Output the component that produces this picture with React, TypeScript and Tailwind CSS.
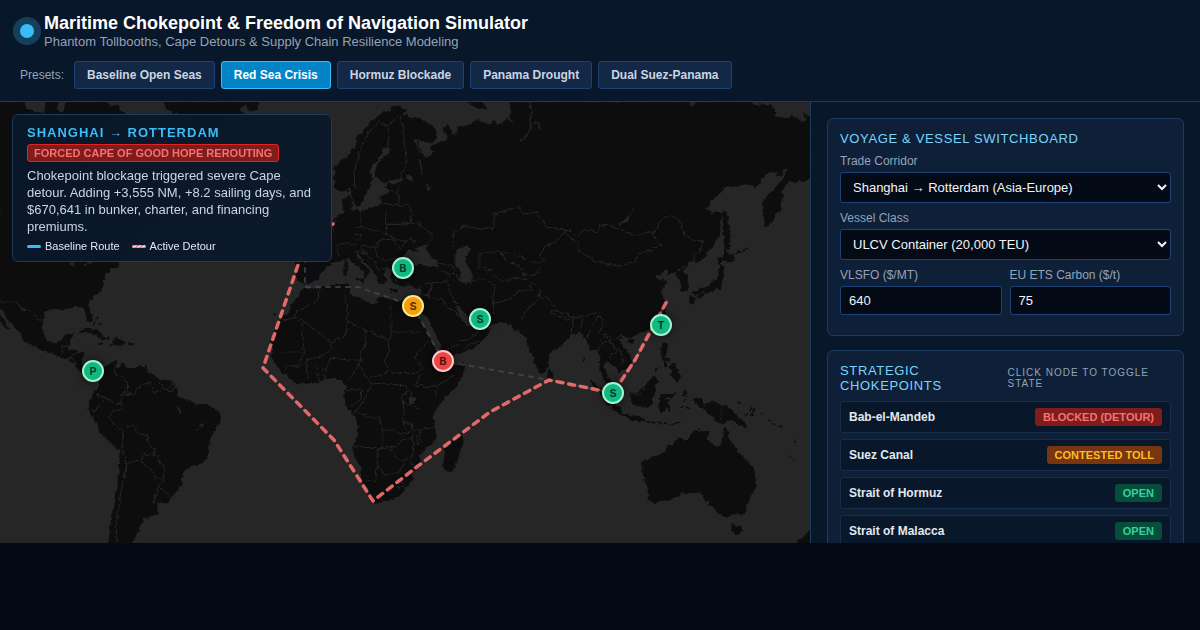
import React, { useState } from 'react';

type NodeState = 'open' | 'contested' | 'blocked';

const presets: string[] = [
  "Baseline Open Seas", "Red Sea Crisis", "Hormuz Blockade", "Panama Drought", "Dual Suez-Panama"
];

const stateLabels: Record<NodeState, string> = {
  blocked: "BLOCKED (DETOUR)",
  contested: "CONTESTED TOLL",
  open: "OPEN"
};

const badgeStyles: Record<NodeState, string> = {
  blocked: "bg-[#7f1d1d] text-[#f87171]",
  contested: "bg-[#78350f] text-[#fbbf24]",
  open: "bg-[#064e3b] text-[#34d399]"
};

const pinStyles: Record<NodeState, string> = {
  blocked: "bg-[#ef4444] border-[#fecaca]",
  contested: "bg-[#f59e0b] border-[#fde68a]",
  open: "bg-[#10b981] border-[#a7f3d0]"
};

// x / y are in map units, see MAP_W and MAP_H
const chokepoints: { name: string; state: NodeState; x: number; y: number }[] = [
  { name: "Bab-el-Mandeb", state: "blocked", x: 443, y: 259 },
  { name: "Suez Canal", state: "contested", x: 413, y: 204 },
  { name: "Strait of Hormuz", state: "open", x: 480, y: 217 },
  { name: "Strait of Malacca", state: "open", x: 613, y: 291 },
  { name: "Panama Canal", state: "open", x: 93, y: 269 },
  { name: "Bosporus", state: "open", x: 403, y: 166 },
  { name: "Taiwan Strait", state: "open", x: 661, y: 223 }
];

const strategic = chokepoints.slice(0, 4);

const MAP_W = 810;
const MAP_H = 441;

const land: string[] = [
  // North and Central America
  "M0 102L23 102 26 107 32 113 45 113 46 102 58 102 57 108 60 113 64 112 66 102 106 102 112 107 117 105 120 111 126 113 118 122 108 135 95 142 88 158 100 170 118 178 122 190 130 180 132 160 145 155 155 165 165 180 176 195 178 208 165 215 172 224 160 235 148 232 138 242 132 250 119 262 117 266 111 268 108 272 104 275 105 279 103 282 102 289 97 292 93 297 89 300 88 305 90 310 92 317 91 322 88 321 86 315 85 310 82 307 78 308 74 306 70 308 66 307 64 310 59 309 52 308 47 310 44 313 43 317 42 325 43 333 46 339 50 343 56 344 61 342 62 337 66 335 73 334 71 339 70 343 68 346 69 351 75 350 83 354 82 362 83 368 89 373 93 371 99 371 102 373 100 378 95 375 88 376 81 372 77 368 75 363 70 361 65 357 57 355 50 352 46 351 40 349 30 343 22 339 20 332 13 326 8 319 4 312 0 309Z",
  "M0 315L4 319 6 324 9 329 6 328 2 323 0 321Z",
  // Caribbean
  "M80 333L84 330 90 329 97 331 103 336 109 339 102 339 95 334 87 331Z",
  "M112 341L116 339 121 340 126 343 119 345 110 344 115 343Z", "M98 344L103 344 101 345Z", "M129 343L134 344 129 345Z",
  // South America
  "M100 374L103 370 107 365 112 363 117 361 115 366 118 368 122 364 127 367 133 368 140 367 146 366 147 371 152 374 155 378 160 381 167 380 173 382 175 388 178 393 177 397 183 399 190 401 194 404 205 405 213 408 219 412 221 418 219 424 214 431 209 436 209 444 208 453 204 462 198 464 192 465 187 469 182 473 181 483 178 489 174 494 168 501 162 503 156 502 158 508 157 513 150 517 142 517 143 523 138 526 139 531 135 531 136 536 134 540 128 543 109 543 110 530 112 514 116 500 118 485 120 463 120 450 112 443 103 436 98 427 92 415 89 410 90 405 91 399 95 392 99 387 101 380Z",
  // Greenland, Iceland and the British Isles
  "M164 102L168 110 178 114 182 128 190 142 202 152 212 140 228 128 242 122 243 113 239 108 246 104 250 111 257 109 258 102Z",
  "M245 153L262 150 266 158 252 163Z",
  "M302 225L305 212 300 200 308 190 312 200 320 215 316 226Z", "M292 218L300 207 303 215 299 222Z",
  // Eurasia
  "M333 222L335 218 340 214 344 213 343 205 344 199 350 196 352 203 349 208 355 211 364 211 372 208 379 208 381 203 380 197 383 195 388 195 390 190 386 188 387 184 393 185 401 182 404 180 400 178 392 180 385 182 379 179 375 175 377 166 381 160 388 154 391 149 389 146 383 147 381 154 375 162 371 167 369 173 373 180 369 187 366 192 363 201 357 207 354 201 352 193 351 187 347 191 341 192 336 189 334 180 336 173 334 167 341 161 348 157 351 151 357 145 356 139 364 130 371 122 378 118 382 113 390 111 396 106 407 111 400 114 410 117 420 119 430 125 436 130 437 138 432 143 423 141 415 138 419 147 423 155 430 157 435 152 430 147 441 142 446 141 447 135 443 129 447 125 452 133 455 137 459 127 470 125 477 120 482 123 490 124 492 120 497 124 503 124 507 119 516 127 511 118 511 102 688 102 690 106 694 107 696 102 750 102 754 106 762 105 770 105 774 109 776 117 785 118 793 116 800 121 805 123 806 117 803 113 810 117 810 178 803 182 799 179 795 183 788 181 784 187 781 193 783 198 780 202 781 210 775 212 774 219 767 226 765 227 764 214 763 205 766 197 773 191 778 185 783 178 789 169 788 167 784 168 782 174 776 177 777 171 769 172 762 178 759 184 755 187 749 184 743 184 737 187 726 186 719 194 711 202 705 209 711 212 710 216 716 212 722 213 720 225 719 235 712 246 703 258 698 263 692 261 688 265 682 272 686 276 688 283 687 290 682 292 681 281 677 276 678 273 671 271 667 276 669 270 665 269 660 275 655 276 658 280 664 280 668 282 661 288 660 292 664 299 666 305 663 314 657 324 649 330 641 333 633 336 626 338 621 335 618 340 623 347 629 354 631 361 629 366 620 372 619 368 613 366 608 361 604 361 603 367 606 372 609 378 612 383 614 389 608 385 603 378 600 370 601 361 599 353 596 349 590 350 588 342 583 335 580 331 576 333 571 333 568 339 562 345 553 350 548 354 548 365 546 370 541 374 538 369 534 359 530 350 526 337 522 334 519 329 515 331 512 326 507 322 497 323 488 325 491 329 486 335 479 343 472 348 465 350 457 354 448 357 444 360 441 355 437 345 431 335 425 322 417 308 420 300 422 292 422 286 415 285 409 284 405 286 398 285 394 283 391 277 393 270 389 268 383 270 383 275 386 280 382 285 378 279 374 271 366 263 360 255 356 252 356 256 363 264 370 271 365 278 364 271 356 265 349 258 343 260 334 262 327 266 322 273 317 280 308 283 304 284 297 280 296 263 310 258 308 242 318 232Z",
  // Novaya Zemlya
  "M468 102L476 108 486 108 482 102Z",
  // Africa
  "M304 288L309 290 318 289 326 286 337 285 347 284 350 287 349 293 356 298 365 301 371 305 377 303 376 299 383 297 393 301 403 302 411 302 416 312 422 324 428 335 433 345 439 356 445 363 452 367 464 363 465 368 461 378 455 388 445 398 437 407 433 413 433 421 435 428 436 437 432 444 423 450 419 455 421 465 414 472 412 480 405 489 399 496 388 500 376 503 371 500 370 492 364 482 361 468 354 454 354 444 359 433 357 420 353 414 346 405 345 395 347 386 342 382 335 377 324 379 316 382 306 382 298 384 290 378 281 371 277 364 271 356 273 350 271 344 273 337 276 328 282 318 290 312 291 304 298 298 302 291Z",
  "M461 433L463 441 459 453 456 463 452 471 446 471 443 466 445 457 444 449 452 444 458 439Z",
  // Mediterranean islands
  "M356 279L364 278 363 283Z", "M344 269L347 268 347 276 344 276Z", "M345 262L347 261 347 267 345 267Z", "M389 290L397 290 397 292 390 291Z", "M413 287L419 285 417 289Z",
  "M549 369L553 375 552 378 548 379 547 375Z",
  // Japan and Sakhalin
  "M723 212L727 214 728 225 731 236 729 240 730 248 725 251 724 230Z",
  "M724 249L729 255 735 258 728 262 722 260 719 264 719 257 724 257Z",
  "M720 264L724 269 722 279 720 289 713 290 707 293 703 291 695 294 692 293 700 289 708 287 714 282 718 276Z",
  "M690 295L695 298 694 303 690 302Z", "M697 296L704 293 703 296 698 298Z",
  "M630 339L634 340 631 344 628 342Z", "M661 314L665 309 665 317 662 322Z",
  // South-east Asia
  "M662 343L667 344 667 353 664 357 670 359 667 361 661 357Z", "M672 364L676 363 677 371 673 371 669 367Z", "M663 360L668 365 665 366Z",
  "M670 375L674 371 678 370 680 378 676 381 672 376Z",
  "M630 394L636 393 644 388 649 381 655 377 659 381 654 385 656 391 652 398 652 404 648 407 640 406 633 404Z",
  "M590 381L598 386 606 396 616 404 621 409 621 414 615 411 606 402 600 393Z",
  "M621 414L630 416 640 417 645 420 640 421 630 419Z",
  "M661 396L666 394 673 395 676 392 673 397 665 397 664 401 670 401 667 404 670 411 666 408 663 413 660 412 659 403Z",
  "M692 399L698 398 703 402 703 406 711 402 721 405 729 409 735 413 738 418 743 421 748 427 740 425 733 421 726 420 725 423 716 422 713 416 706 412 705 408 698 406Z",
  // Australia, Tasmania, New Zealand
  "M643 462L655 457 665 453 668 445 671 446 676 442 681 437 686 442 689 439 691 433 696 431 702 432 709 432 706 440 714 446 720 448 723 440 725 428 728 433 729 440 735 446 737 452 743 457 750 465 755 472 756 483 753 493 748 501 745 513 735 514 727 517 721 515 716 511 713 504 708 505 711 497 706 502 702 493 694 491 683 493 675 496 670 500 661 500 654 503 648 500 649 494 645 480 643 472Z",
  "M731 524L736 526 742 525 741 531 737 535 733 531Z",
  "M812 527L807 534 801 538 795 545 812 545Z"
];

// Inland seas and gulfs, painted back over the land
const water: string[] = [
  "M402 261L405 254 408 249 414 252 418 250 414 247 423 246 429 244 425 250 431 256 438 262 438 267 429 267 420 264 411 266Z",
  "M454 255L459 248 465 246 471 247 470 252 465 257 469 266 473 276 472 283 466 285 460 281 461 272 456 265Z",
  "M456 306L461 308 467 316 473 321 479 319 486 324 490 328 480 328 473 325 468 326 462 321Z",
  "M635 205L633 212 628 220 620 225 617 226 626 218 631 213Z",
  "M409 398L415 396 418 401 412 404 409 402Z",
  "M459 119L462 120 461 124 458 123Z", "M405 174L413 176 413 182 408 179Z",
  "M71 262L75 259 74 267 70 266Z"
];

// Rivers and lakes that are only a line wide
const thinWater = "M530 102L532 112 530 120 531 128 525 138 519 141M531 124L538 122 541 130M396 282L402 271M415 140L420 153 427 156M84 265L92 262M197 430L203 424M178 407L180 412M420 160L422 174M428 184L429 190M612 408L613 414";

const borders = "M0 302L17 302 22 310 28 309 34 314 38 320 43 320M62 354L62 346 68 345M64 360L71 356 80 352M68 360L72 357 76 364M117 363L114 368 115 374 123 377 127 382 126 390 121 395 121 404 113 402 107 398 96 394M127 382L128 394 134 394 139 387 146 383 150 382 153 392 160 391 163 388 160 382M163 388L166 390 174 384M166 390L172 391 175 387M121 395L134 394M96 394L102 399 106 399 98 407 94 411 91 408M121 404L120 410 113 411 110 419 116 426 120 429 134 425 136 431 147 436 149 445 155 449 154 455 144 454 142 462 132 461 127 464 122 450 123 429M142 462L152 470 155 478 162 478 166 467 160 463 157 455M127 464L123 481 120 496 119 508 116 525 117 543M166 476L158 487 155 495 154 503M158 486L170 496"
  + "M320 289L317 300 309 305 295 312 295 318 283 320M295 317L311 327 331 342 345 335 348 330 346 300 343 292M347 321L363 329 388 340 391 338 391 304M391 332L420 332M302 323L304 352 281 352M331 342L332 349 321 356 307 360 298 368M364 329L366 342 360 356 361 360 348 360 331 358 326 367M388 340L389 351 384 362 390 371 376 377 366 377 358 362M360 362L353 374 346 382M304 353L298 365 288 366 284 372M307 365L308 379M317 365L319 381M322 367L323 379M326 367L325 380M390 371L399 374 406 372 418 374 422 368 415 357 422 348 428 340M422 373L415 385 424 386 436 387 446 380 455 375M436 387L436 398M366 377L371 384 366 397 357 410 354 412M346 391L352 390 362 390 361 399 350 407M371 384L385 383 404 386 408 388 403 397 404 413 402 423 410 432 400 434 395 430 383 430 379 417 366 417 363 413 354 413M404 402L420 410M408 390L412 396M383 430L383 448 354 447M379 448L377 463 376 482 370 482 366 480M379 449L393 447 403 440 412 438 414 445 412 457 402 461 394 455 390 448M377 466L385 475 398 472 405 463M412 438L413 430 419 430 422 442 417 444 417 435M402 425L404 422 414 425 413 429M420 429L434 428M398 485L402 482 405 486 400 489 397 486M412 460L414 477"
  + "M354 188L355 170 360 150 370 130 380 121 388 127 389 146M388 126L399 116 403 124 404 143 408 160 400 178M386 190L398 194 398 184M382 203L394 205 400 206 408 204 412 213 410 222 398 224 388 224M398 194L399 204M361 211L361 225 369 229 385 234 387 224 385 210M355 229L361 225M385 234L392 236 404 242 412 238 415 243M387 225L405 224 418 223 432 234 432 239 425 245M338 245L344 243 355 245 361 236 353 232M361 245L373 247 382 239 394 240 402 251M361 245L365 254 375 262 378 270 389 267M382 239L375 250 378 257 385 260 402 258M354 252L367 254M337 246L339 255M405 240L402 248M337 236L332 230 335 220M438 263L452 266 455 270 450 275 441 270M450 275L446 281 432 283 424 284M446 281L450 292 456 304M432 284L428 296 440 299 452 311 465 318M422 296L430 293M460 280L452 272M455 266L461 268"
  + "M453 246L454 233 465 225 479 229 494 228 494 214 518 207 524 214 536 212 547 227 565 230 558 240 545 247 540 255 545 262 530 262 520 257 510 252 495 252 488 252 479 254 479 267M473 281L480 278 495 285 493 300 494 314M479 267L490 270 500 280 510 280 520 277 530 282 532 290 520 290 512 298 500 302 494 303M500 253L510 263 520 265 525 276 535 275 540 268M530 282L540 287 538 300 528 308 520 322M538 294L550 300 557 310 572 317 583 318 594 312 600 316 592 325 587 338M557 311L550 310 552 314 570 320M574 318L572 333M583 319L580 330M600 316L603 325 598 335 602 343 598 350M605 333L614 340 622 335M603 333L612 345 620 350 624 362 618 366M602 343L610 340 616 352 608 358M565 230L570 231 576 237 585 229 598 233 600 224 610 226 625 231 637 236 648 232 653 234 660 221 665 217 676 217 681 224 684 234 693 241 703 240 700 250 694 254 694 261 682 268 674 273M565 233L578 243 578 252 592 258 595 262 618 266 635 261 638 254 650 250 661 245 653 236 652 232M459 345L445 350M478 342L470 344 465 350M475 326L478 333 468 340 458 341M630 394L640 394 645 388M721 405L721 422";

const islets = "M730 256L748 248M735 261L727 261M750 416L755 411 751 407M752 408L745 415M760 413L764 416M768 420L775 425M778 425L781 427M794 440L797 445M787 456L794 461M738 402L742 404M684 392L685 402M684 390L687 396M679 407L691 408M646 422L668 423M670 425L680 421M655 371L660 366M584 358L583 364M97 318L100 325M95 322L92 328M0 280L3 284M689 437L700 429M272 313L276 315";

const detour = "M333 224L310 232 298 265 263 368 334 440 373 501 418 466 490 412 549 380 613 393 635 360 667 301";
const baseline = "M305 238L305 287 358 287 413 306 443 361 549 380 613 393 635 360 667 301";

const WorldMap: React.FC = () => (
  <svg viewBox="0 102 810 441" preserveAspectRatio="none" className="block h-full w-full" aria-hidden="true">
    <defs>
      {/* breaks up the straight coast segments */}
      <filter id="coast" x="0" y="102" width="810" height="441" filterUnits="userSpaceOnUse">
        <feTurbulence type="fractalNoise" baseFrequency="0.2" numOctaves="2" seed="4" result="noise" />
        <feDisplacementMap in="SourceGraphic" in2="noise" scale="5" xChannelSelector="R" yChannelSelector="G" />
      </filter>
    </defs>
    <g filter="url(#coast)">
      <g fill="#0a0a0a" stroke="#0a0a0a" strokeLinejoin="round">
        {land.map((d, i) => <path key={i} d={d} />)}
      </g>
      <g fill="#262626">
        {water.map((d, i) => <path key={i} d={d} />)}
      </g>
      <path d="M413 306L427 322 443 361M430 328L440 348" fill="none" stroke="#262626" strokeWidth="5" strokeLinejoin="round" />
      <path d={islets} fill="none" stroke="#0a0a0a" strokeWidth="1.5" strokeDasharray="4 2" />
      <path d={thinWater} fill="none" stroke="#262626" strokeWidth="1.5" strokeLinecap="round" />
      <path d={borders} fill="none" stroke="#282828" strokeWidth="1" strokeLinejoin="round" />
    </g>
    <path d={baseline} fill="none" stroke="#475569" strokeWidth="2" strokeLinecap="round" strokeDasharray="4 6" opacity="0.6" />
    <path d={detour} fill="none" stroke="#f87171" strokeWidth="3.5" strokeLinecap="round" strokeLinejoin="round" strokeDasharray="6 6" opacity="0.9" />
  </svg>
);

const RoutePanel: React.FC = () => (
  <section className="absolute left-3 top-3 w-80 rounded-md border border-[#1e3a5f] bg-[#0a182a]/95 px-3.5 pt-2.5 pb-2 backdrop-blur-md">
    <h2 className="text-[13px] leading-[15px] font-bold tracking-[1px] text-[#38bdf8]">SHANGHAI → ROTTERDAM</h2>
    <div className="mt-1 flex">
      <span className="rounded-[3px] border border-[#dc2626] bg-[#7f1d1d] px-1.5 text-[11px] leading-4 font-bold text-[#f87171]">
        FORCED CAPE OF GOOD HOPE REROUTING
      </span>
    </div>
    <p className="mt-[5px] text-[13px] leading-[17px] text-[#cbd5e1]">
      Chokepoint blockage triggered severe Cape detour. Adding +3,555 NM, +8.2 sailing days, and $670,641 in bunker, charter, and financing premiums.
    </p>
    <div className="mt-1 flex gap-3 text-[11px] leading-[14px] text-[#e2e8f0]">
      <span className="flex items-center gap-1"><i className="h-[3px] w-3.5 rounded-sm bg-[#38bdf8]" />Baseline Route</span>
      <span className="flex items-center gap-1">
        <svg width="14" height="3" viewBox="0 0 14 3" aria-hidden="true">
          <rect width="14" height="3" rx="1" fill="#f87171" />
          <path d="M1 2.2L4.5 0.8M5.5 2.2L9 0.8M10 2.2L13 0.8" stroke="#fff" strokeWidth="1" />
        </svg>
        Active Detour
      </span>
    </div>
  </section>
);

const labelClass = "block text-xs leading-[14px] text-[#94a3b8] mb-1";
const fieldClass = "block w-full rounded-[3px] border border-[#1e4276] bg-[#050b16] text-[13px] text-[#f1f5f9]";
const headingClass = "text-[13px] leading-[15px] tracking-wider text-[#7dd3fc]";
const cardClass = "rounded-md border border-[#1e3a5f] bg-[#0d2038] p-3";

export default function App() {
  const [preset, setPreset] = useState("Red Sea Crisis");
  const [corridor, setCorridor] = useState("Shanghai → Rotterdam (Asia-Europe)");
  const [vessel, setVessel] = useState("ULCV Container (20,000 TEU)");
  const [fuel, setFuel] = useState("640");
  const [carbon, setCarbon] = useState("75");

  return (
    <div className="min-h-screen bg-[#040a15] font-['Liberation_Sans',Arial,sans-serif] text-[#f1f5f9]">
      <header className="border-b border-[#1e3a5f] bg-[#081729] px-5 py-3">
        <div className="flex items-center gap-2.5">
          <span className="size-3.5 rounded-full bg-[#38bdf8] shadow-[0_0_0_7px_rgba(56,189,248,0.25)]" />
          <div>
            <h1 className="text-lg leading-[23px] font-bold text-white">Maritime Chokepoint &amp; Freedom of Navigation Simulator</h1>
            <p className="text-[13px] leading-[14px] text-[#94a3b8]">Phantom Tollbooths, Cape Detours &amp; Supply Chain Resilience Modeling</p>
          </div>
        </div>
        <div className="mt-3 flex flex-wrap items-center gap-1.5">
          <span className="mr-1 text-xs text-[#94a3b8]">Presets:</span>
          {presets.map(name => (
            <button
              key={name}
              type="button"
              onClick={() => setPreset(name)}
              className={`h-7 rounded-[3px] border px-3 text-xs font-bold ${name === preset ? 'border-[#38bdf8] bg-[#0284c7] text-white' : 'border-[#1e4276] bg-[#132846] text-[#cbd5e1]'}`}
            >
              {name}
            </button>
          ))}
        </div>
      </header>

      <main className="flex h-[70vh]">
        <div className="relative min-w-0 flex-1 overflow-hidden bg-[#262626]">
          <WorldMap />
          {chokepoints.map(node => (
            <button
              key={node.name}
              type="button"
              aria-label={node.name}
              style={{ left: `${(node.x / MAP_W) * 100}%`, top: `${(node.y / MAP_H) * 100}%` }}
              className={`absolute flex size-[22px] -translate-x-1/2 -translate-y-1/2 items-center justify-center rounded-full border-2 font-[Inter,sans-serif] text-[11px] font-bold text-black/70 shadow-[0_0_8px_rgba(0,0,0,0.6)] ${pinStyles[node.state]}`}
            >
              {node.name[0]}
            </button>
          ))}
          <RoutePanel />
        </div>

        <aside className="flex w-[390px] shrink-0 flex-col gap-3.5 overflow-hidden border-l border-[#1e3a5f] bg-[#081729] p-4">
          <section className={`${cardClass} shrink-0`}>
            <h2 className={headingClass}>VOYAGE &amp; VESSEL SWITCHBOARD</h2>
            <div className="mt-2 mb-2">
              <label htmlFor="corridor" className={labelClass}>Trade Corridor</label>
              <select id="corridor" value={corridor} onChange={(e) => setCorridor(e.target.value)} className={`${fieldClass} h-[31px] px-2`}>
                <option>Shanghai → Rotterdam (Asia-Europe)</option>
              </select>
            </div>
            <div className="mb-2">
              <label htmlFor="vessel" className={labelClass}>Vessel Class</label>
              <select id="vessel" value={vessel} onChange={(e) => setVessel(e.target.value)} className={`${fieldClass} h-[31px] px-2`}>
                <option>ULCV Container (20,000 TEU)</option>
              </select>
            </div>
            <div className="mb-2 grid grid-cols-2 gap-2">
              <div>
                <label htmlFor="fuel" className={labelClass}>VLSFO ($/MT)</label>
                <input id="fuel" value={fuel} onChange={(e) => setFuel(e.target.value)} className={`${fieldClass} h-[29px] px-2`} />
              </div>
              <div>
                <label htmlFor="carbon" className={labelClass}>EU ETS Carbon ($/t)</label>
                <input id="carbon" value={carbon} onChange={(e) => setCarbon(e.target.value)} className={`${fieldClass} h-[29px] px-2`} />
              </div>
            </div>
          </section>

          <section className={`${cardClass} shrink-0`}>
            <div className="mb-2 grid grid-cols-2 items-center gap-1">
              <h2 className={headingClass}>STRATEGIC<br />CHOKEPOINTS</h2>
              <p className="text-[10px] leading-[11px] tracking-[1px] text-[#94a3b8]">CLICK NODE TO TOGGLE STATE</p>
            </div>
            <ul className="flex flex-col gap-1.5">
              {strategic.map(node => (
                <li key={node.name} className="flex h-8 items-center justify-between rounded-[3px] border border-[#162d4c] bg-[#081729] px-2">
                  <span className="text-xs font-bold text-[#e2e8f0]">{node.name}</span>
                  <span className={`rounded-[3px] px-2 text-[11px] leading-[18px] font-bold ${badgeStyles[node.state]}`}>{stateLabels[node.state]}</span>
                </li>
              ))}
            </ul>
          </section>
        </aside>
      </main>
    </div>
  );
}
